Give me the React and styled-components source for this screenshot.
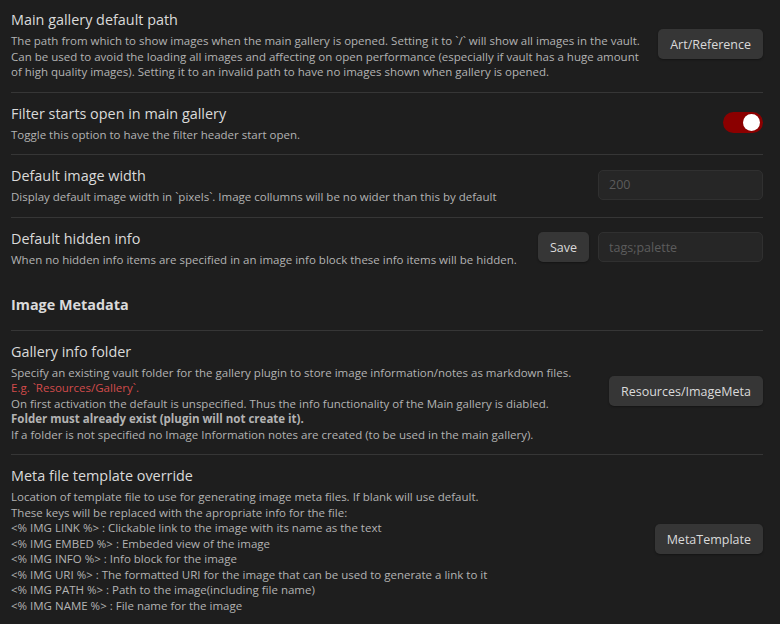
import React from "react";
import styled, { createGlobalStyle } from "styled-components";

const Global = createGlobalStyle`
  html, body { margin: 0; padding: 0; background: #1e1e1e; }
  body { font-family: "Open Sans", "Noto Sans", sans-serif; color: #dadada; }
  * { box-sizing: border-box; }
`;

const Page = styled.div`
  width: 780px;
  height: 624px;
  overflow: hidden;
  padding: 0 17px 0 11px;
  background: #1e1e1e;
`;

const Item = styled.div`
  display: flex;
  align-items: center;
  padding: ${(p) => (p.$first ? "9px 0 12px" : "10px 0 12px")};
  border-top: ${(p) => (p.$first ? "none" : "1px solid #363636")};
`;

const Heading = styled.div`
  padding: 15.5px 0 15px;
  font-size: 14.4px;
  line-height: 20px;
  font-weight: 700;
  color: #dadada;
`;

const Info = styled.div`
  flex: 1 1 auto;
  min-width: 0;
  margin-right: 16px;
`;

const Name = styled.div`
  font-size: 14.4px;
  line-height: 21px;
  color: #dadada;
`;

const Desc = styled.div`
  padding-top: 3px;
  font-size: 11.5px;
  line-height: 15.5px;
  color: #b3b3b3;
`;

const Line = styled.div`
  color: ${(p) => (p.$accent ? "#d24b4b" : "inherit")};
  font-weight: ${(p) => (p.$bold ? 700 : 400)};
  white-space: nowrap;
`;

const Control = styled.div`
  display: flex;
  align-items: center;
  gap: 9px;
  flex: 0 0 auto;
`;

const Button = styled.button`
  height: 30px;
  padding: 0 12px;
  border: none;
  border-radius: 5px;
  background: #363636;
  color: #dadada;
  font-family: inherit;
  font-size: 12.5px;
  box-shadow: 0 1px 2px rgba(0, 0, 0, 0.35);
`;

const Input = styled.input`
  width: 165px;
  height: 30px;
  padding: 0 10px;
  border: 1px solid #303030;
  border-radius: 5px;
  background: #262626;
  color: #dadada;
  font-family: inherit;
  font-size: 12.5px;
  outline: none;
  &::placeholder { color: #5c5c5c; }
`;

const Toggle = styled.div`
  position: relative;
  width: 40px;
  height: 21px;
  border-radius: 11px;
  background: #8b0000;
`;

const Knob = styled.div`
  position: absolute;
  top: 2px;
  right: 3px;
  width: 17px;
  height: 17px;
  border-radius: 50%;
  background: #ffffff;
`;

const Setting = ({ first, name, lines, children }) => (
  <Item $first={first}>
    <Info>
      <Name>{name}</Name>
      <Desc>
        {lines.map((l, i) =>
          typeof l === "string" ? (
            <Line key={i}>{l}</Line>
          ) : (
            <Line key={i} $accent={l.accent} $bold={l.bold}>
              {l.text}
            </Line>
          )
        )}
      </Desc>
    </Info>
    <Control>{children}</Control>
  </Item>
);

export default function App() {
  return (
    <>
      <Global />
      <Page>
        <Setting
          first
          name="Main gallery default path"
          lines={[
            "The path from which to show images when the main gallery is opened. Setting it to `/` will show all images in the vault.",
            "Can be used to avoid the loading all images and affecting on open performance (especially if vault has a huge amount",
            "of high quality images). Setting it to an invalid path to have no images shown when gallery is opened.",
          ]}
        >
          <Button>Art/Reference</Button>
        </Setting>
        <Setting
          name="Filter starts open in main gallery"
          lines={["Toggle this option to have the filter header start open."]}
        >
          <Toggle>
            <Knob />
          </Toggle>
        </Setting>
        <Setting
          name="Default image width"
          lines={[
            "Display default image width in `pixels`. Image collumns will be no wider than this by default",
          ]}
        >
          <Input placeholder="200" />
        </Setting>
        <Setting
          name="Default hidden info"
          lines={[
            "When no hidden info items are specified in an image info block these info items will be hidden.",
          ]}
        >
          <Button>Save</Button>
          <Input placeholder="tags;palette" />
        </Setting>
        <Heading>Image Metadata</Heading>
        <Setting
          name="Gallery info folder"
          lines={[
            "Specify an existing vault folder for the gallery plugin to store image information/notes as markdown files.",
            { text: "E.g. `Resources/Gallery`.", accent: true },
            "On first activation the default is unspecified. Thus the info functionality of the Main gallery is diabled.",
            { text: "Folder must already exist (plugin will not create it).", bold: true },
            "If a folder is not specified no Image Information notes are created (to be used in the main gallery).",
          ]}
        >
          <Button>Resources/ImageMeta</Button>
        </Setting>
        <Setting
          name="Meta file template override"
          lines={[
            "Location of template file to use for generating image meta files. If blank will use default.",
            "These keys will be replaced with the apropriate info for the file:",
            "<% IMG LINK %> : Clickable link to the image with its name as the text",
            "<% IMG EMBED %> : Embeded view of the image",
            "<% IMG INFO %> : Info block for the image",
            "<% IMG URI %> : The formatted URI for the image that can be used to generate a link to it",
            "<% IMG PATH %> : Path to the image(including file name)",
            "<% IMG NAME %> : File name for the image",
          ]}
        >
          <Button>MetaTemplate</Button>
        </Setting>
      </Page>
    </>
  );
}
